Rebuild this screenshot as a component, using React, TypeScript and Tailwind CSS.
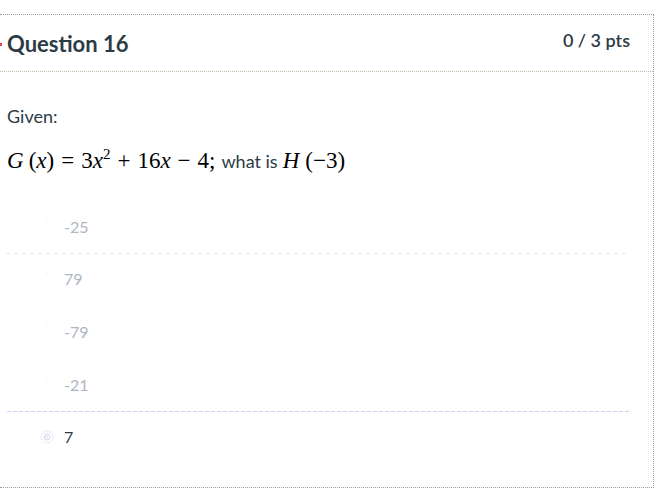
import React from "react";

const answers = [
  { label: "-25", sep: "dotted" },
  { label: "79", sep: "none" },
  { label: "-79", sep: "none" },
  { label: "-21", sep: "dashed" },
  { label: "7", sep: "none", picked: true },
];

function Radio({ picked }: { picked?: boolean }) {
  if (picked) {
    return (
      <svg width="14" height="14" viewBox="0 0 14 14" className="shrink-0">
        <circle cx="7" cy="7" r="6" fill="none" stroke="#dcdaf5" strokeWidth="1" strokeDasharray="2 1" />
        <circle cx="7" cy="7" r="3" fill="none" stroke="#d6d3f3" strokeWidth="1" />
        <path d="M4 7h6M7 4v6" stroke="#e2e0f7" strokeWidth="1" />
      </svg>
    );
  }
  return (
    <svg width="14" height="14" viewBox="0 0 14 14" className="shrink-0">
      <circle cx="2" cy="11" r="0.6" fill="#d8dcf0" />
      <circle cx="7" cy="1" r="0.6" fill="#d8dcf0" />
      <circle cx="12" cy="5" r="0.6" fill="#e0e4f0" />
    </svg>
  );
}

function Op({ c }: { c: string }) {
  return <span className="mx-[7px]">{c}</span>;
}

function MathLine() {
  const m = "font-['Liberation_Serif','DejaVu_Serif',serif] text-[23px] text-black";
  return (
    <div className="flex items-baseline whitespace-pre">
      <span className={m}>
        <i>G</i>
        <span className="ml-[5px]">(</span>
        <i>x</i>)
        <Op c="=" />3<i>x</i>
        <span className="inline-block -translate-y-[9px] text-[15px]">2</span>
        <Op c="+" />16<i>x</i>
        <Op c="−" />4;
      </span>
      <span className="ml-[6px] text-[18px] text-[#2d3b45]">what is</span>
      <span className={m + " ml-[5px]"}>
        <i>H</i>
        <span className="ml-[6px]">(−3)</span>
      </span>
    </div>
  );
}

export default function App() {
  return (
    <div className="min-h-[496px] bg-white pt-[14px] font-['Lato','Open_Sans',sans-serif]">
      <div className="w-[654px] border-t border-r border-b border-dotted border-[#9c9c9c] bg-white">
        <div className="relative flex h-[57px] items-start justify-between border-b border-dotted border-[#bdbda8] pl-[7px] pr-[23px]">
          <span className="absolute left-0 top-[28px] h-[3px] w-[2px] bg-[#e0454a]" />
          <h2 className="mt-[16px] text-[22px] font-bold leading-[26px] text-[#2d3b45]">
            Question 16
          </h2>
          <span className="mt-[14px] text-[18px] font-semibold leading-[22px] text-[#2d3b45]">
            0 / 3 pts
          </span>
        </div>

        <div className="pl-[7px] pr-[23px] pt-[33px] pb-[23px]">
          <p className="text-[18px] leading-[22px] text-[#2d3b45]">Given:</p>
          <div className="mt-[17px]">
            <MathLine />
          </div>

          <div className="mt-[22px]">
            {answers.map((a) => (
              <div key={a.label}>
                <div className="flex h-[53px] items-center gap-[10px] pl-[33px]">
                  <Radio picked={a.picked} />
                  <span
                    className={
                      a.picked
                        ? "text-[16px] leading-[18px] text-[#2d3b45]"
                        : "text-[16px] leading-[18px] text-[#aeb6c4]"
                    }
                  >
                    {a.label}
                  </span>
                </div>
                {a.sep === "dotted" && (
                  <div className="-my-[1px] mr-[5px] h-[1px] bg-[linear-gradient(to_right,#d9d6f2_2px,transparent_2px)] bg-[length:8px_1px]" />
                )}
                {a.sep === "dashed" && (
                  <div className="-my-[1px] h-[1px] bg-[linear-gradient(to_right,#d3cef3_4px,transparent_4px)] bg-[length:6px_1px]" />
                )}
              </div>
            ))}
          </div>
        </div>
      </div>
    </div>
  );
}
